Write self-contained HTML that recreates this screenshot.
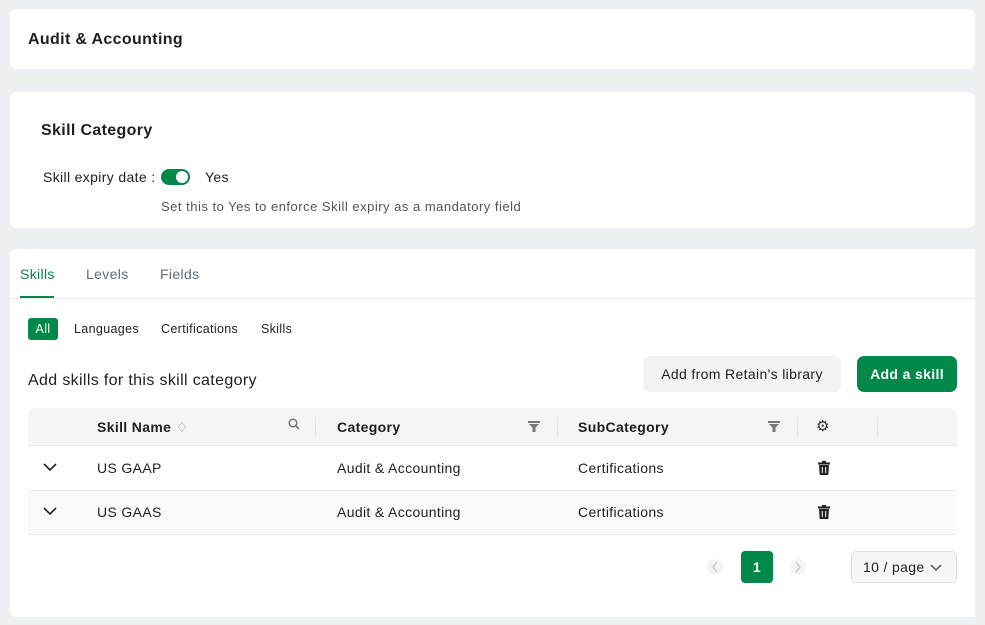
<!DOCTYPE html><html><head><style>
*{box-sizing:border-box;margin:0;padding:0}
body{width:985px;height:625px;background:#eef0f3;font-family:"Liberation Sans",sans-serif;color:#1f1f1f;position:relative;overflow:hidden;letter-spacing:0.35px}
.card{position:absolute;left:10px;width:965px;background:#fff;border-radius:7px}
.abs{position:absolute;white-space:nowrap}
.th{position:absolute;top:408px;height:38px;line-height:38px;font-weight:bold;font-size:14px}
.td{position:absolute;font-size:14px}
.sep{position:absolute;top:417px;width:1px;height:20px;background:#e6e6e6}
</style></head><body>
<div class="card" style="top:9px;height:60px"><div class="abs" style="left:18px;top:22px;font-size:16px;font-weight:bold">Audit &amp; Accounting</div></div>
<div class="card" style="top:92px;height:136px">
<div class="abs" style="left:31px;top:30px;font-size:16px;font-weight:bold">Skill Category</div>
<div class="abs" style="left:33px;top:77px;font-size:14px">Skill expiry date :</div>
<div class="abs" style="left:151px;top:77px;width:29px;height:16px;border-radius:8px;background:#00884a"><div style="position:absolute;right:2px;top:2px;width:12px;height:12px;border-radius:50%;background:#fff"></div></div>
<div class="abs" style="left:195px;top:77px;font-size:14px">Yes</div>
<div class="abs" style="left:151px;top:107px;font-size:13px;color:#555;letter-spacing:0.5px">Set this to Yes to enforce Skill expiry as a mandatory field</div>
</div>
<div class="card" style="top:249px;height:368px;border-radius:7px 0 0 7px"></div>
<div class="abs" style="left:20px;top:266px;font-size:14px;color:#00884a">Skills</div>
<div class="abs" style="left:20px;top:296px;width:34px;height:2px;background:#00884a"></div>
<div class="abs" style="left:86px;top:266px;font-size:14px;color:#5f6b7a">Levels</div>
<div class="abs" style="left:160px;top:266px;font-size:14px;color:#5f6b7a">Fields</div>
<div class="abs" style="left:10px;top:298px;width:965px;height:1px;background:#ebebeb"></div>
<div class="abs" style="left:28px;top:318px;width:30px;height:22px;border-radius:3px;background:#00884a;color:#fff;font-size:12.5px;line-height:22px;text-align:center">All</div>
<div class="abs" style="left:74px;top:322px;font-size:12.5px">Languages</div>
<div class="abs" style="left:161px;top:322px;font-size:12.5px">Certifications</div>
<div class="abs" style="left:261px;top:322px;font-size:12.5px">Skills</div>
<div class="abs" style="left:28px;top:372px;font-size:16px">Add skills for this skill category</div>
<div class="abs" style="left:643px;top:356px;width:198px;height:36px;border-radius:7px;background:#f3f3f3;font-size:14px;line-height:36px;text-align:center">Add from Retain's library</div>
<div class="abs" style="left:857px;top:356px;width:100px;height:36px;border-radius:7px;background:#00884a;color:#fff;font-weight:bold;font-size:14px;line-height:36px;text-align:center">Add a skill</div>
<div class="abs" style="left:28px;top:408px;width:929px;height:38px;background:#f5f5f5;border-radius:7px 7px 0 0;border-bottom:1px solid #e8e8e8"></div>
<div class="th" style="left:97px">Skill Name <span style="font-weight:normal;color:#888">♢</span></div>
<svg class="abs" style="left:288px;top:418px" width="12" height="12" viewBox="0 0 12 12"><circle cx="5" cy="5" r="3.8" fill="none" stroke="#777" stroke-width="1.5"/><path d="M8 8l3 3" stroke="#777" stroke-width="1.6"/></svg>
<div class="sep" style="left:315px"></div>
<div class="th" style="left:337px">Category</div>
<svg class="abs" style="left:528px;top:421px" width="12" height="11" viewBox="0 0 12 11"><path d="M0 0h12v2H0zM1 3h10L7.5 6.5V11h-3V6.5z" fill="#777"/></svg>
<div class="sep" style="left:557px"></div>
<div class="th" style="left:578px">SubCategory</div>
<svg class="abs" style="left:768px;top:421px" width="12" height="11" viewBox="0 0 12 11"><path d="M0 0h12v2H0zM1 3h10L7.5 6.5V11h-3V6.5z" fill="#777"/></svg>
<div class="sep" style="left:797px"></div>
<div class="abs" style="left:816px;top:417px;font-size:15px;color:#333">⚙</div>
<div class="sep" style="left:877px"></div>
<div class="abs" style="left:28px;top:490px;width:929px;height:44px;background:#fafafa"></div>
<div class="abs" style="left:28px;top:490px;width:929px;height:1px;background:#ececec"></div>
<div class="abs" style="left:28px;top:534px;width:929px;height:1px;background:#ececec"></div>
<svg class="abs" style="left:43px;top:463px" width="14" height="9" viewBox="0 0 14 9"><path d="M1 1l6 6 6-6" fill="none" stroke="#222" stroke-width="1.6"/></svg>
<svg class="abs" style="left:43px;top:507px" width="14" height="9" viewBox="0 0 14 9"><path d="M1 1l6 6 6-6" fill="none" stroke="#222" stroke-width="1.6"/></svg>
<div class="td" style="left:97px;top:460px">US GAAP</div>
<div class="td" style="left:337px;top:460px">Audit &amp; Accounting</div>
<div class="td" style="left:578px;top:460px">Certifications</div>
<div class="td" style="left:97px;top:504px">US GAAS</div>
<div class="td" style="left:337px;top:504px">Audit &amp; Accounting</div>
<div class="td" style="left:578px;top:504px">Certifications</div>
<svg class="abs" style="left:818px;top:461px" width="12" height="14" viewBox="0 0 12 14"><path d="M4 0h4v1.5h4v2H0v-2h4zM1 4h10l-.7 10H1.7z" fill="#222"/><path d="M4.3 6v6M7.7 6v6" stroke="#fff" stroke-width="1"/></svg>
<svg class="abs" style="left:818px;top:505px" width="12" height="14" viewBox="0 0 12 14"><path d="M4 0h4v1.5h4v2H0v-2h4zM1 4h10l-.7 10H1.7z" fill="#222"/><path d="M4.3 6v6M7.7 6v6" stroke="#fff" stroke-width="1"/></svg>
<svg class="abs" style="left:707px;top:558px" width="16" height="18" viewBox="0 0 16 18"><circle cx="8" cy="9" r="8" fill="#f4f4f4"/><path d="M10 4L6 9l4 5" fill="none" stroke="#ccc" stroke-width="1.5"/></svg>
<div class="abs" style="left:741px;top:551px;width:32px;height:32px;border-radius:4px;background:#00884a;color:#fff;font-weight:bold;font-size:14px;line-height:32px;text-align:center">1</div>
<svg class="abs" style="left:790px;top:558px" width="16" height="18" viewBox="0 0 16 18"><circle cx="8" cy="9" r="8" fill="#f4f4f4"/><path d="M6 4l4 5-4 5" fill="none" stroke="#ccc" stroke-width="1.5"/></svg>
<div class="abs" style="left:851px;top:551px;width:106px;height:32px;border-radius:5px;background:#f7f7f7;border:1px solid #ddd;font-size:14px;line-height:30px;padding-left:11px">10 / page <svg width="12" height="8" viewBox="0 0 12 8" style="margin-left:1px"><path d="M1 1l5 5 5-5" fill="none" stroke="#444" stroke-width="1.3"/></svg></div>
</body></html>
